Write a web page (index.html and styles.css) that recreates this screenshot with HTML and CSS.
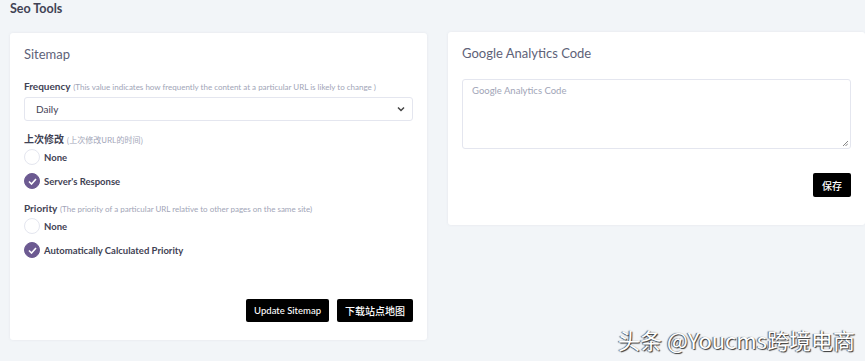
FILE: index.html
```html
<!DOCTYPE html>
<html lang="zh">
<head>
<meta charset="utf-8">
<title>Seo Tools</title>
<link rel="stylesheet" href="styles.css">
</head>
<body>
<div class="page">
  <h1 class="page-title">Seo Tools</h1>
  <div class="grid">
    <section class="card card-left">
      <h2 class="card-title">Sitemap</h2>
      <div class="field">
        <div class="label"><b>Frequency</b> <span class="hint">(This value indicates how frequently the content at a particular URL is likely to change )</span></div>
        <div class="select"><span>Daily</span>
          <svg class="chev" width="8" height="6" viewBox="0 0 8 6"><path d="M1 1.5 L4 4.5 L7 1.5" fill="none" stroke="#444" stroke-width="1.5"/></svg>
        </div>
      </div>
      <div class="field field-cn">
        <div class="label"><b class="cn">上次修改</b> <span class="hint cn-hint">(上次修改URL的时间)</span></div>
        <div class="radio"><span class="dot"></span><span>None</span></div>
        <div class="radio"><span class="dot on"><svg width="9" height="7" viewBox="0 0 9 7"><path d="M1 3.5 L3.5 6 L8 1" fill="none" stroke="#fff" stroke-width="1.6"/></svg></span><span>Server's Response</span></div>
      </div>
      <div class="field field-pri">
        <div class="label"><b>Priority</b> <span class="hint">(The priority of a particular URL relative to other pages on the same site)</span></div>
        <div class="radio"><span class="dot"></span><span>None</span></div>
        <div class="radio"><span class="dot on"><svg width="9" height="7" viewBox="0 0 9 7"><path d="M1 3.5 L3.5 6 L8 1" fill="none" stroke="#fff" stroke-width="1.6"/></svg></span><span>Automatically Calculated Priority</span></div>
      </div>
      <div class="actions">
        <button class="btn">Update Sitemap</button>
        <button class="btn btn-cn">下载站点地图</button>
      </div>
    </section>
    <section class="card card-right">
      <h2 class="card-title">Google Analytics Code</h2>
      <div class="textarea"><span class="placeholder">Google Analytics Code</span>
        <svg class="grip" width="6" height="6" viewBox="0 0 6 6"><path d="M1 6 L6 1 M3.5 6 L6 3.5" stroke="#777" stroke-width="0.9"/></svg>
      </div>
      <div class="actions actions-right">
        <button class="btn btn-cn">保存</button>
      </div>
    </section>
  </div>
</div>
<div class="watermark">头条 @Youcms跨境电商</div>
</body>
</html>
```

FILE: styles.css
```css
* { box-sizing: border-box; }
html, body { margin: 0; padding: 0; }
body {
  background: #f2f5f8;
  font-family: Lato, "Noto Sans", "Noto Sans CJK SC", sans-serif;
  color: #3f4254;
  width: 865px;
  height: 361px;
  overflow: hidden;
  position: relative;
}
.page { padding: 0 0 0 10px; }
.page-title {
  margin: 0;
  padding-top: 1px;
  font-size: 12.5px;
  font-weight: 700;
  line-height: 16px;
  color: #3f4254;
}
.grid {
  display: grid;
  grid-template-columns: 417px 417px;
  column-gap: 21px;
  margin-top: 15px;
  align-items: start;
}
.card {
  background: #fff;
  border-radius: 3px;
  box-shadow: 0 0 3px rgba(82, 63, 105, 0.08);
  padding: 13px 14px 18px 14px;
}
.card-left { margin-top: 1px; }
.card-title {
  margin: 0;
  font-size: 13px;
  font-weight: 400;
  line-height: 16px;
  color: #5e6278;
}
.field { margin-top: 17px; }
.label {
  font-size: 10px;
  line-height: 14px;
  color: #3f4254;
}
.label b { font-weight: 700; font-size: 10px; }
.label .hint { color: #a1a5b7; font-size: 8px; }
.select {
  margin-top: 3px;
  height: 24px;
  border: 1px solid #e4e6ef;
  border-radius: 3px;
  display: flex;
  align-items: center;
  justify-content: space-between;
  padding: 0 7px 0 11px;
  font-size: 10px;
  color: #3f4254;
}
.field-cn { margin-top: 11px; }
.cn { font-family: "Noto Sans CJK SC", sans-serif; font-size: 11px; }
.cn-hint { font-family: "Noto Sans CJK SC", sans-serif; }
.radio {
  display: flex;
  align-items: center;
  gap: 4px;
  font-size: 9.5px;
  font-weight: 700;
  color: #3f4254;
  height: 16px;
  margin-top: 2px;
}
.radio + .radio { margin-top: 8px; }
.dot {
  width: 16px;
  height: 16px;
  border-radius: 50%;
  border: 1px solid #e4e6ef;
  background: #fff;
  flex: none;
  display: flex;
  align-items: center;
  justify-content: center;
}
.dot.on { background: #6c5a91; border-color: #6c5a91; }
.field-pri { margin-top: 12px; }
.actions {
  display: flex;
  justify-content: flex-end;
  gap: 8px;
  margin-top: 41px;
}
.btn {
  background: #000;
  color: #fff;
  border: 0;
  border-radius: 2px;
  height: 23px;
  padding: 0 8px;
  font-family: Lato, "Noto Sans", sans-serif;
  font-size: 9.5px;
  font-weight: 500;
}
.btn-cn { font-family: "Noto Sans CJK SC", sans-serif; font-size: 10px; padding: 0 8px; }
.card-right { padding-bottom: 28px; }
.textarea {
  margin-top: 18px;
  height: 70px;
  width: 389px;
  border: 1px solid #e4e6ef;
  border-radius: 3px;
  position: relative;
  padding: 5px 9px;
  font-size: 9.5px;
  line-height: 12px;
}
.placeholder { font-size: 9.5px; color: #a1a5b7; }
.grip { position: absolute; right: 2px; bottom: 2px; }
.actions-right { margin-top: 24px; width: 389px; }
.actions-right .btn { height: 24px; padding: 0 9px; }
.watermark {
  position: absolute;
  right: 10px;
  bottom: 6px;
  font-family: "Noto Sans CJK SC", sans-serif;
  font-size: 22px;
  color: #fff;
  text-shadow: 1px 1px 1px #333, -1px 0 1px #555;
}
```
